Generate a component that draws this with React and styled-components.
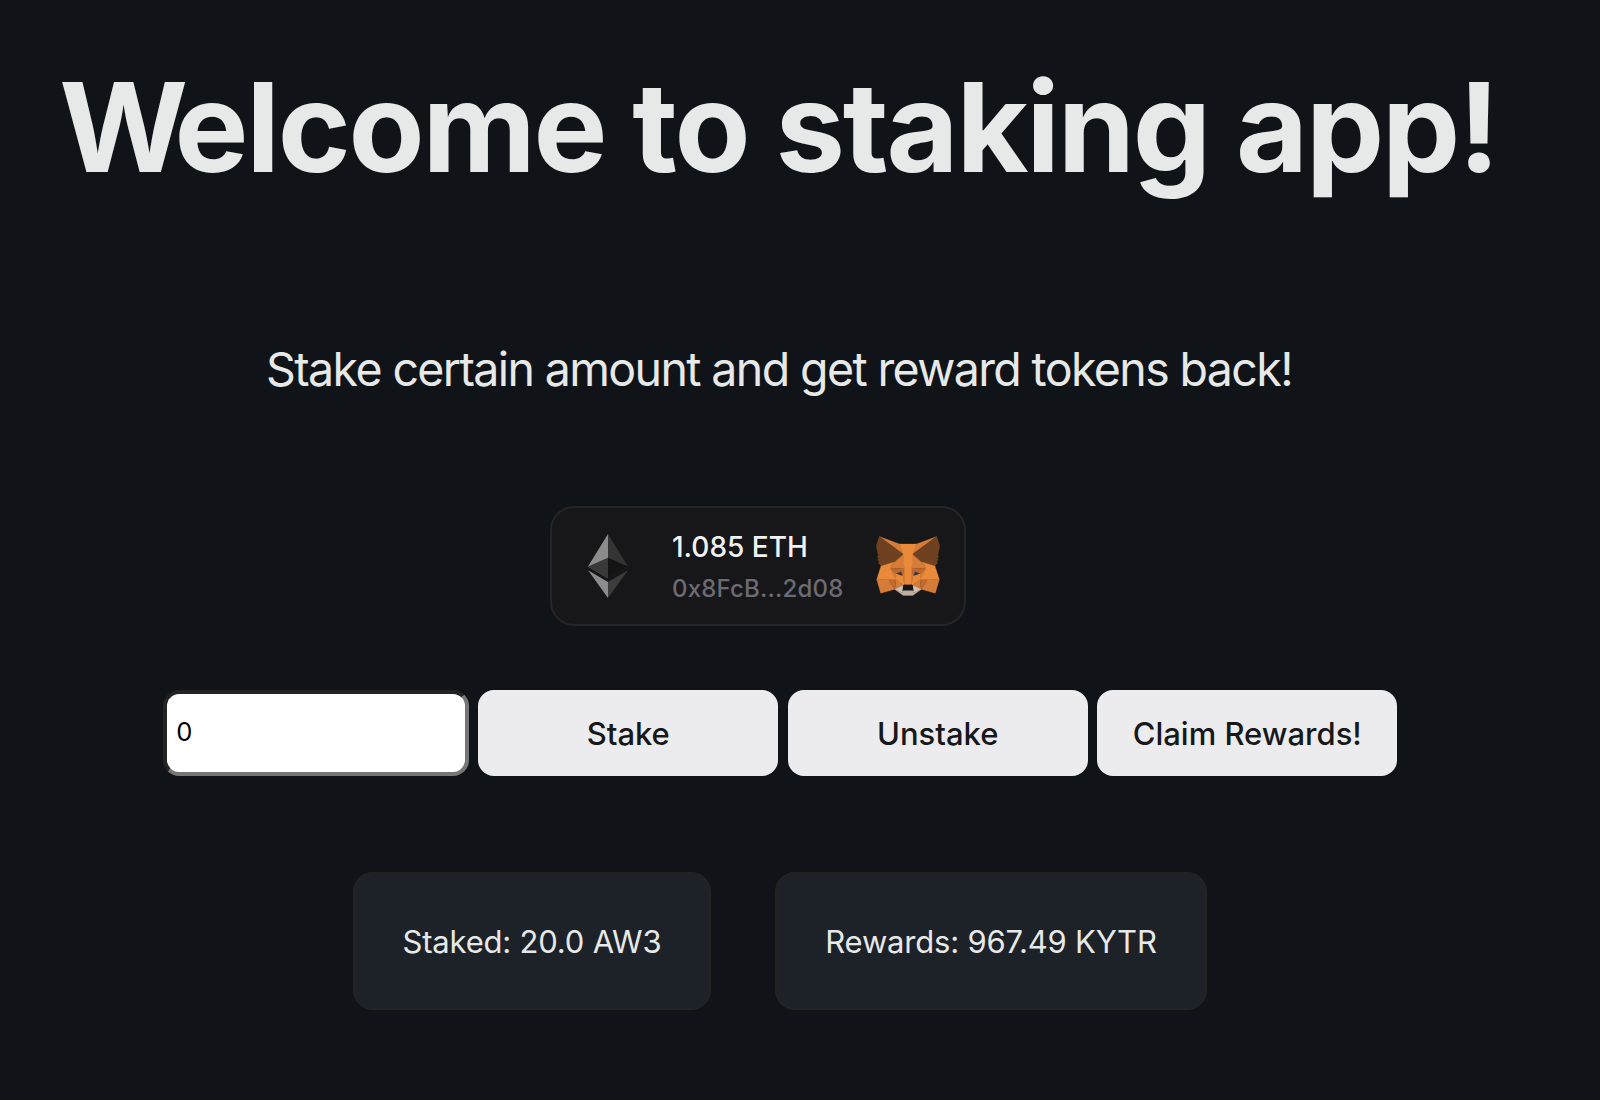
import React, { useState } from "react";
import styled, { createGlobalStyle } from "styled-components";

const GlobalStyle = createGlobalStyle`
  * { box-sizing: border-box; }
  body {
    margin: 0;
    background: #101418;
    color: #e7e9e8;
    font-family: Inter, "Liberation Sans", sans-serif;
  }
`;

const Page = styled.main`
  width: 1560px;
  height: 1100px;
  display: flex;
  flex-direction: column;
  align-items: center;
  overflow: hidden;
`;

const Title = styled.h1`
  margin: 51px 3px 0 0;
  font-size: 124.2px;
  line-height: 152px;
  font-weight: 700;
  letter-spacing: -2.25px;
  white-space: nowrap;
`;

const Initial = styled.span`
  letter-spacing: -13.6px;
`;

const Subtitle = styled.p`
  margin: 137px 2px 0 0;
  font-size: 46.5px;
  line-height: 58px;
  letter-spacing: -1.62px;
  white-space: nowrap;
`;

const Wallet = styled.section`
  width: 416px;
  height: 120px;
  margin: 108px 44px 0 0;
  padding: 0 24px 0 36px;
  display: flex;
  align-items: center;
  background: #171719;
  border: 2px solid #252527;
  border-radius: 24px;
`;

const EtherLogo = styled.svg`
  width: 40px;
  height: 64px;
  flex: none;
`;

const FoxLogo = styled.svg`
  width: 64px;
  height: 60px;
  flex: none;
`;

const Account = styled.div`
  flex: 1;
  margin: 4px 0 0 44px;
  display: flex;
  flex-direction: column;
  gap: 8px;
  white-space: nowrap;
`;

const Balance = styled.span`
  font-size: 28px;
  line-height: 34px;
  font-weight: 500;
  color: #f2f2f3;
`;

const Address = styled.span`
  font-size: 24px;
  line-height: 34px;
  font-weight: 500;
  letter-spacing: 0.2px;
  color: #6c6a73;
`;

const Actions = styled.form`
  margin: 64px 0 0;
  display: flex;
  gap: 9.5px;
`;

const AmountInput = styled.input`
  width: 306px;
  height: 86px;
  padding: 0 9.5px 4px;
  background: #fff;
  color: #000;
  border: 4px solid;
  border-color: #232323 #767676 #767676 #232323;
  border-radius: 16px;
  outline: none;
  font: 400 25.6px Inter, "Liberation Sans", sans-serif;
`;

const ActionButton = styled.button`
  width: 300px;
  height: 86px;
  padding: 0;
  border: 0;
  border-radius: 16px;
  background: #ececee;
  color: #17181a;
  font: 500 31px Inter, "Liberation Sans", sans-serif;
`;

const Stats = styled.section`
  margin: 96px 0 0;
  display: flex;
  gap: 64px;
`;

const StatCard = styled.div`
  width: ${(p) => p.$width};
  height: 138px;
  display: flex;
  align-items: center;
  justify-content: center;
  background: #1d2128;
  border: 2px solid #232324;
  border-radius: 20px;
  font-size: 31px;
  letter-spacing: -0.2px;
  white-space: nowrap;
`;

const foxShapes = [
  ["#d57c38", "274.1,35.5 174.6,109.4 193,65.8"],
  ["#d57c38", "44.4,35.5 143.1,110.1 125.6,65.8"],
  ["#d57c38", "238.3,206.8 211.8,247.4 268.5,263 284.8,207.7"],
  ["#d57c38", "33.9,207.7 50.1,263 106.8,247.4 80.3,206.8"],
  ["#d57c38", "103.6,138.2 87.8,162.1 144.1,164.6 142.1,104.1"],
  ["#d57c38", "214.9,138.2 175.9,103.4 174.6,164.6 230.8,162.1"],
  ["#d57c38", "106.8,247.4 140.6,230.9 111.4,208.1"],
  ["#d57c38", "177.9,230.9 211.8,247.4 207.1,208.1"],
  ["#d3c2b5", "211.8,247.4 177.9,230.9 180.6,253 180.3,262.3"],
  ["#d3c2b5", "106.8,247.4 138.3,262.3 138.1,253 140.6,230.9"],
  ["#293445", "138.8,193.5 110.6,185.2 130.5,176.1"],
  ["#293445", "179.7,193.5 188,176.1 208,185.2"],
  ["#c0692f", "106.8,247.4 111.6,206.8 80.3,207.7"],
  ["#c0692f", "207,206.8 211.8,247.4 238.3,207.7"],
  ["#c0692f", "230.8,162.1 174.6,164.6 179.8,193.5 188.1,176.1 208.1,185.2"],
  ["#c0692f", "110.6,185.2 130.6,176.1 138.8,193.5 144.1,164.6 87.8,162.1"],
  ["#d87c38", "87.8,162.1 111.4,208.1 110.6,185.2"],
  ["#d87c38", "208.1,185.2 207.1,208.1 230.8,162.1"],
  ["#d87c38", "144.1,164.6 138.8,193.5 145.4,227.6 146.9,182.7"],
  ["#d87c38", "174.6,164.6 171.9,182.6 173.1,227.6 179.8,193.5"],
  ["#e88a3a", "179.8,193.5 173.1,227.6 177.9,230.9 207.1,208.1 208.1,185.2"],
  ["#e88a3a", "110.6,185.2 111.4,208.1 140.6,230.9 145.4,227.6 138.8,193.5"],
  ["#bdaea0", "180.3,262.3 180.6,253 178.1,250.8 140.4,250.8 138.1,253 138.3,262.3 106.8,247.4 117.8,256.4 140.1,271.9 178.4,271.9 200.8,256.4 211.8,247.4"],
  ["#161616", "177.9,230.9 173.1,227.6 145.4,227.6 140.6,230.9 138.1,253 140.4,250.8 178.1,250.8 180.6,253"],
  ["#6f4121", "278.3,114.2 286.8,73.4 274.1,35.5 177.9,106.9 214.9,138.2 267.2,153.5 278.8,140 273.8,136.4 281.8,129.1 275.6,124.3 283.6,118.2"],
  ["#6f4121", "31.8,73.4 40.3,114.2 34.9,118.2 42.9,124.3 36.8,129.1 44.8,136.4 39.8,140 51.3,153.5 103.6,138.2 140.6,106.9 44.4,35.5"],
  ["#e88a3a", "267.2,153.5 214.9,138.2 230.8,162.1 207.1,208.1 238.3,207.7 284.8,207.7"],
  ["#e88a3a", "103.6,138.2 51.3,153.5 33.9,207.7 80.3,207.7 111.4,208.1 87.8,162.1"],
  ["#e88a3a", "174.6,164.6 177.9,106.9 193.1,65.8 125.6,65.8 140.6,106.9 144.1,164.6 145.3,182.8 145.4,227.6 173.1,227.6 173.3,182.8"],
];

function Ether() {
  return (
    <EtherLogo viewBox="0 0 256 417" preserveAspectRatio="none">
      <path fill="#343434" d="M127.9 0 125.1 9.5v275.7l2.8 2.8 127.9-75.6z" />
      <path fill="#8c8c8c" d="M127.9 0 0 212.4 127.9 288V154.2z" />
      <path fill="#3c3c3b" d="m127.9 312.2-1.5 1.9v98.2l1.5 4.6L256 236.6z" />
      <path fill="#8c8c8c" d="M127.9 416.9V312.2L0 236.6z" />
      <path fill="#141414" d="m127.9 288 127.9-75.6-127.9-58.2z" />
      <path fill="#393939" d="m0 212.4 127.9 75.6V154.2z" />
    </EtherLogo>
  );
}

function Fox() {
  return (
    <FoxLogo viewBox="31.3 34 256 240" strokeLinejoin="round">
      {foxShapes.map(([color, points]) => (
        <polygon key={points} fill={color} stroke={color} strokeWidth="1" points={points} />
      ))}
    </FoxLogo>
  );
}

export default function App() {
  const [amount, setAmount] = useState("0");
  return (
    <>
      <GlobalStyle />
      <Page>
        <Title><Initial>W</Initial>elcome to staking app!</Title>
        <Subtitle>Stake certain amount and get reward tokens back!</Subtitle>
        <Wallet>
          <Ether />
          <Account>
            <Balance>1.085 ETH</Balance>
            <Address>0x8FcB...2d08</Address>
          </Account>
          <Fox />
        </Wallet>
        <Actions onSubmit={(e) => e.preventDefault()}>
          <AmountInput value={amount} onChange={(e) => setAmount(e.target.value)} />
          <ActionButton type="button">Stake</ActionButton>
          <ActionButton type="button">Unstake</ActionButton>
          <ActionButton type="button">Claim Rewards!</ActionButton>
        </Actions>
        <Stats>
          <StatCard $width="358px">Staked: 20.0 AW3</StatCard>
          <StatCard $width="432px">Rewards: 967.49 KYTR</StatCard>
        </Stats>
      </Page>
    </>
  );
}
